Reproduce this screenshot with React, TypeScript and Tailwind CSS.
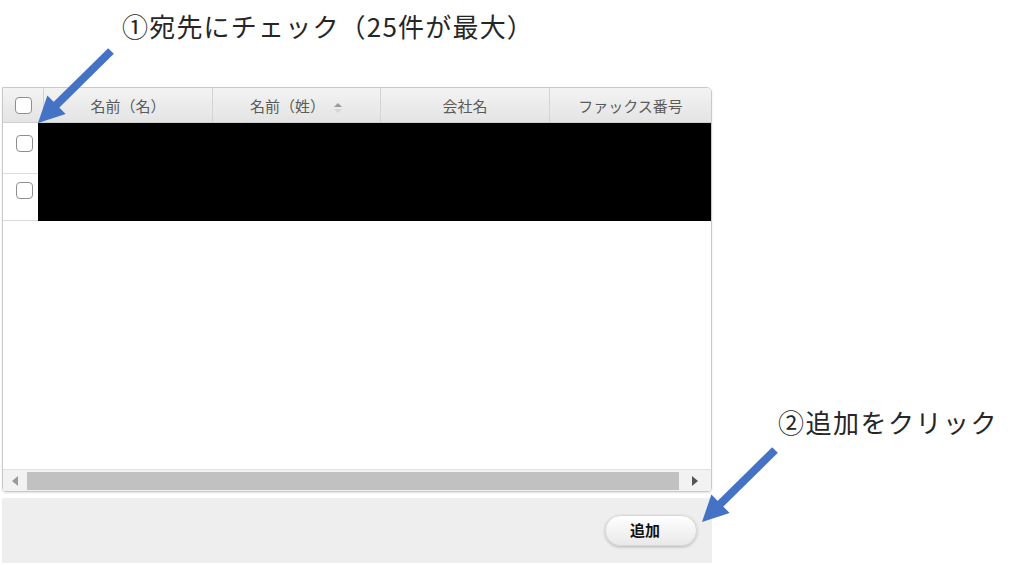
import React from "react";

const jp = { fontFamily: '"Noto Sans CJK JP", "Liberation Sans", sans-serif' };

function Check() {
  return <span className="block w-[17px] h-[17px] rounded-[4px] border-[1.5px] border-[#8f8f8f] bg-white" />;
}

function SortIcon() {
  return (
    <svg width="10" height="14" viewBox="0 0 10 14" className="ml-2 mt-[2px]">
      <path d="M1 6 L5 2 L9 6 Z" fill="#9a9a9a" />
      <path d="M1 8 L5 12 L9 8 Z" fill="#d6d6d6" />
    </svg>
  );
}

function Arrow({ x1, y1, x2, y2 }: { x1: number; y1: number; x2: number; y2: number }) {
  const dx = x2 - x1;
  const dy = y2 - y1;
  const len = Math.hypot(dx, dy);
  const ux = dx / len;
  const uy = dy / len;
  const head = 26;
  const bx = x2 - ux * head;
  const by = y2 - uy * head;
  const w = 13;
  const p1 = `${bx - uy * w},${by + ux * w}`;
  const p2 = `${bx + uy * w},${by - ux * w}`;
  return (
    <g>
      <line x1={x1} y1={y1} x2={bx + ux * 2} y2={by + uy * 2} stroke="#4472C4" strokeWidth="8" />
      <polygon points={`${x2},${y2} ${p1} ${p2}`} fill="#4472C4" />
    </g>
  );
}

export default function App() {
  const cols = [
    { label: "名前（名）", w: "w-[169px]" },
    { label: "名前（姓）", w: "w-[168px]", sort: true },
    { label: "会社名", w: "w-[169px]" },
    { label: "ファックス番号", w: "flex-1" },
  ];

  return (
    <div className="relative w-[1024px] h-[565px] bg-white overflow-hidden" style={jp}>
      {/* annotations */}
      <div className="absolute left-[122px] top-[6px] text-[26px] text-[#262626] tracking-[1.2px]">
        ①宛先にチェック（25件が最大）
      </div>
      <div className="absolute left-[778px] top-[402px] text-[26px] text-[#262626] tracking-[1.5px]">
        ②追加をクリック
      </div>

      <div className="pt-[87px] pl-[2px] w-[712px]">
        {/* grid panel */}
        <div className="h-[405px] border border-[#c9c9c9] rounded-tr-[5px] rounded-b-[4px] flex flex-col overflow-hidden shadow-[0_1px_2px_rgba(0,0,0,0.12)]">
          <div className="h-[35px] flex bg-gradient-to-b from-[#f3f3f3] to-[#e4e4e4] border-b border-[#cfcfcf] text-[15px] text-[#5a5a5a]">
            <div className="w-[41px] flex items-center justify-center border-r border-[#d4d4d4]">
              <Check />
            </div>
            {cols.map((c, i) => (
              <div
                key={c.label}
                className={`${c.w} flex items-center justify-center pt-[3px] ${i < 3 ? "border-r border-[#d4d4d4]" : ""}`}
              >
                <span>{c.label}</span>
                {c.sort && <SortIcon />}
              </div>
            ))}
          </div>

          <div className="flex-1 flex flex-col bg-white">
            <div className="flex h-[98px]">
              <div className="w-[35px] flex flex-col">
                <div className="h-[51px] pl-[13px] pt-[12px] border-b border-[#dcdcdc]">
                  <Check />
                </div>
                <div className="h-[47px] pl-[13px] pt-[8px] border-b border-[#dcdcdc]">
                  <Check />
                </div>
              </div>
              <div className="flex-1 bg-black" />
            </div>
            <div className="flex-1" />
            {/* horizontal scrollbar */}
            <div className="h-[22px] flex items-center bg-[#f2f2f2] border-t border-[#e2e2e2]">
              <div className="w-[24px] flex items-center justify-center">
                <svg width="6" height="10" viewBox="0 0 6 10">
                  <path d="M6 0 L0 5 L6 10 Z" fill="#9a9a9a" />
                </svg>
              </div>
              <div className="flex-1 h-[18px] bg-[#c1c1c1]" />
              <div className="w-[32px] flex items-center justify-center">
                <svg width="6" height="10" viewBox="0 0 6 10">
                  <path d="M0 0 L6 5 L0 10 Z" fill="#555555" />
                </svg>
              </div>
            </div>
          </div>
        </div>

        {/* toolbar */}
        <div className="mt-[6px] h-[65px] bg-[#eeeeee] flex items-center justify-end pr-[15px]">
          <button className="w-[92px] h-[31px] rounded-full bg-gradient-to-b from-white to-[#e9e9e9] border border-[#d8d8d8] shadow-[0_1px_3px_rgba(0,0,0,0.25)] text-[15px] font-bold text-[#111] pr-[12px]">
            追加
          </button>
        </div>
      </div>

      {/* arrows */}
      <svg className="absolute inset-0 pointer-events-none" width="1024" height="565">
        <Arrow x1={111} y1={51} x2={38} y2={123} />
        <Arrow x1={775} y1={450} x2={702} y2={522} />
      </svg>
    </div>
  );
}
